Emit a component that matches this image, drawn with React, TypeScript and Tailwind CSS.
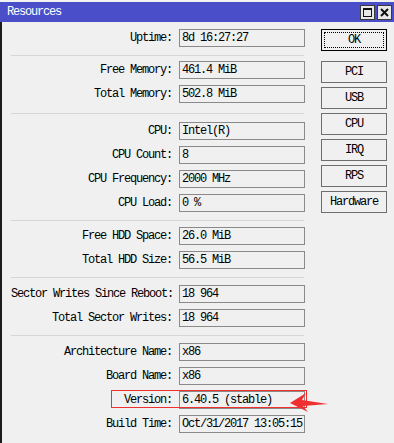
import React from 'react';

type Row = { label: string; value: string };

const groups: { rows: Row[]; sep?: string }[] = [
  { rows: [{ label: 'Uptime:', value: '8d 16:27:27' }], sep: 'mt-[8px] mb-[5px]' },
  {
    rows: [
      { label: 'Free Memory:', value: '461.4 MiB' },
      { label: 'Total Memory:', value: '502.8 MiB' },
    ],
    sep: 'mt-[10px] mb-[8px]',
  },
  {
    rows: [
      { label: 'CPU:', value: 'Intel(R)' },
      { label: 'CPU Count:', value: '8' },
      { label: 'CPU Frequency:', value: '2000 MHz' },
      { label: 'CPU Load:', value: '0 %' },
    ],
    sep: 'mt-[8px] mb-[6px]',
  },
  {
    rows: [
      { label: 'Free HDD Space:', value: '26.0 MiB' },
      { label: 'Total HDD Size:', value: '56.5 MiB' },
    ],
    sep: 'mt-[8px] mb-[7px]',
  },
  {
    rows: [
      { label: 'Sector Writes Since Reboot:', value: '18 964' },
      { label: 'Total Sector Writes:', value: '18 964' },
    ],
    sep: 'mt-[8px] mb-[7px]',
  },
  {
    rows: [
      { label: 'Architecture Name:', value: 'x86' },
      { label: 'Board Name:', value: 'x86' },
      { label: 'Version:', value: '6.40.5 (stable)' },
      { label: 'Build Time:', value: 'Oct/31/2017 13:05:15' },
    ],
  },
];

const sideButtons = ['PCI', 'USB', 'CPU', 'IRQ', 'RPS', 'Hardware'];

function Field({ label, value }: Row) {
  return (
    <div className="flex items-center gap-[7px] h-[18px]">
      <span className="w-[161px] text-right whitespace-nowrap">{label}</span>
      <div className="w-[126px] h-[18px] border border-[#8a8a8a] flex items-center pl-[2px] whitespace-nowrap overflow-hidden">
        {value}
      </div>
    </div>
  );
}

export default function App() {
  return (
    <div className="relative w-[394px] h-[443px] bg-[#f0f0f0] overflow-hidden text-black text-[12px] tracking-[-1.2px] leading-none font-['Liberation_Mono','DejaVu_Sans_Mono',monospace]">
      {/* 타이틀 바 */}
      <div className="h-[22px] border-t-2 border-[#f2f2f2] bg-[#4a4fc9] flex items-center justify-between pl-[7px] pr-[2px]">
        <span className="text-white">Resources</span>
        <div className="flex gap-[2px]">
          <div className="w-[15px] h-[15px] bg-[#e8e8e8] border border-[#3a3a3a] flex items-center justify-center">
            <div className="w-[9px] h-[9px] border border-[#111] border-t-2" />
          </div>
          <div className="w-[15px] h-[15px] bg-[#e8e8e8] border border-[#3a3a3a] flex items-center justify-center">
            <svg width="9" height="9" viewBox="0 0 9 9">
              <path d="M1 1 L8 8 M8 1 L1 8" stroke="#111" strokeWidth="2" />
            </svg>
          </div>
        </div>
      </div>

      <div className="flex h-[421px] border-l-2 border-[#1c1c1c]">
        {/* 정보 필드 */}
        <div className="w-[303px] pl-[9px] pt-[7px] flex flex-col">
          {groups.map((g, i) => (
            <div key={i}>
              <div className="flex flex-col gap-[6px]">
                {g.rows.map((r) => (
                  <Field key={r.label} {...r} />
                ))}
              </div>
              {g.sep && <div className={`w-[293px] h-px bg-[#d6d6d6] ${g.sep}`} />}
            </div>
          ))}
        </div>

        {/* 버튼 */}
        <div className="ml-[16px] pt-[7px] w-[66px] flex flex-col">
          <button className="h-[22px] border border-black p-[2px]">
            <div className="w-full h-full border border-dotted border-black flex items-center justify-center">
              OK
            </div>
          </button>
          <div className="mt-[10px] flex flex-col gap-[4px]">
            {sideButtons.map((b) => (
              <button
                key={b}
                className="h-[22px] border border-[#6e6e6e] flex items-center justify-center"
              >
                {b}
              </button>
            ))}
          </div>
        </div>
      </div>

      {/* 빨간 표시 */}
      <div className="absolute left-[111px] top-[390px] w-[196px] h-[18px] border border-[#f03030]" />
      <svg className="absolute left-0 top-0" width="394" height="443">
        <polygon
          points="290,403 306,393 302,400 328,404 303,406 308,412"
          fill="#f03030"
        />
      </svg>
    </div>
  );
}
